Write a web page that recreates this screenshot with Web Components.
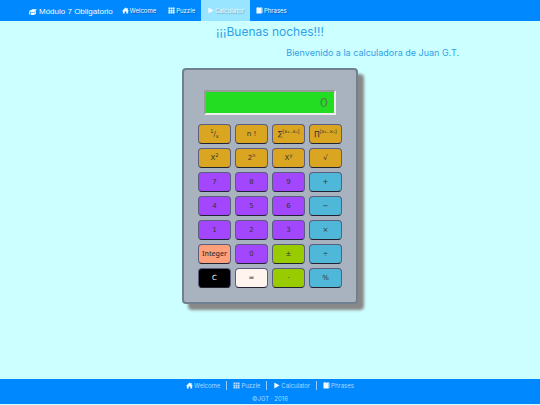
<!DOCTYPE html>
<html lang="es">
<head>
<meta charset="utf-8">
<meta name="viewport" content="width=device-width, initial-scale=1">
<title>Calculator</title>
<style>
    body {
        margin: 0;
        background: #ccffff;
        font-family: "Liberation Sans", Arial, sans-serif;
    }
</style>
</head>
<body>
<calc-app></calc-app>

<script>
const ICONS = {
    cap: '<path d="M0 6 8 2l8 1-6 6-6-1z"/><path d="M4 9l6 1 4-4v5c-2 3-7 4-11 2z"/><path d="M1 6h2l-1 7H0z"/>',
    home: '<path d="M8 1 0 9h2v6h4v-5h4v5h4V9h2l-3-3V2h-2v2z"/>',
    grid: '<path d="M1 1h4v4H1zM6 1h4v4H6zM11 1h4v4h-4zM1 6h4v4H1zM6 6h4v4H6zM11 6h4v4h-4zM1 11h4v4H1zM6 11h4v4H6zM11 11h4v4h-4z"/>',
    play: '<path d="M3 1l12 7-12 7z"/>',
    book: '<path d="M3 0h11v1H4L3 2h10v13H1V2z"/><path d="M14 2l1-1v12l-1 1z"/>'
};

const LINKS = [
    ['home', 'Welcome'],
    ['grid', 'Puzzle'],
    ['play', 'Calculator'],
    ['book', 'Phrases']
];

class GlyphIcon extends HTMLElement {
    connectedCallback() {
        this.attachShadow({ mode: 'open' });
        this.shadowRoot.innerHTML = `
            <style>
                :host {
                    display: inline-flex;
                    flex: none;
                    width: var(--icon-size, 7px);
                    height: var(--icon-size, 7px);
                }

                svg {
                    width: 100%;
                    height: 100%;
                    fill: currentColor;
                }
            </style>
            <svg viewBox="0 0 16 16" aria-hidden="true">${ICONS[this.getAttribute('name')]}</svg>
        `;
    }
}

class NavBar extends HTMLElement {
    connectedCallback() {
        this.attachShadow({ mode: 'open' });
        this.shadowRoot.innerHTML = `
            <style>
                :host {
                    display: block;
                    background: #0088ff;
                    color: #f2faff;
                }

                nav {
                    display: flex;
                    align-items: stretch;
                    height: 21px;
                    padding-left: 29px;
                }

                a {
                    display: flex;
                    align-items: center;
                    gap: 1px;
                    padding: 0 6px;
                    color: inherit;
                    font-family: Inter, sans-serif;
                    font-size: 6px;
                    text-decoration: none;
                    text-shadow: 1px 1px 1px rgba(0, 0, 0, 0.3);
                }

                a.brand {
                    --icon-size: 8px;
                    gap: 2px;
                    padding: 2px 3px 0 0;
                    font-family: "Liberation Sans", Arial, sans-serif;
                    font-size: 8px;
                    text-shadow: none;
                }

                a.active {
                    background: #99e5ff;
                }
            </style>
            <nav>
                <a class="brand" href="#"><glyph-icon name="cap"></glyph-icon>Módulo 7 Obligatorio</a>
                ${LINKS.map(([icon, text]) => `
                    <a href="#${text}" ${text === 'Calculator' ? 'class="active"' : ''}><glyph-icon name="${icon}"></glyph-icon>${text}</a>
                `).join('')}
            </nav>
        `;
    }
}

class CalcKey extends HTMLElement {
    connectedCallback() {
        this.attachShadow({ mode: 'open' });
        this.shadowRoot.innerHTML = `
            <style>
                :host {
                    display: block;
                    --key: #a347ff;
                    --ink: #333333;
                }

                :host([kind="fn"]) { --key: #daa520; }
                :host([kind="op"]) { --key: #4fb7d8; }
                :host([kind="sign"]) { --key: #99cc00; }
                :host([kind="int"]) { --key: #ffa07a; }
                :host([kind="clear"]) { --key: #000000; --ink: #ffffff; }
                :host([kind="equal"]) { --key: #fff5ee; }

                button {
                    display: block;
                    width: 100%;
                    height: 20px;
                    padding: 0;
                    border: 1px solid #5c5c80;
                    border-bottom-color: #222233;
                    border-radius: 4px;
                    background: var(--key);
                    color: var(--ink);
                    font: 7px/18px "DejaVu Sans", sans-serif;
                    white-space: nowrap;
                    cursor: pointer;
                }

                :host([kind="int"]) button {
                    font-family: "Noto Sans", sans-serif;
                    font-weight: 500;
                }

                ::slotted(sup), ::slotted(sub) {
                    font-size: 5px;
                    line-height: 0;
                }
            </style>
            <button type="button"><slot></slot></button>
        `;
    }
}

class CalcPad extends HTMLElement {
    connectedCallback() {
        this.attachShadow({ mode: 'open' });
        this.shadowRoot.innerHTML = `
            <style>
                :host {
                    display: block;
                    box-sizing: border-box;
                    width: 176px;
                    padding: 20px 15px 14px 14px;
                    border: 2px solid #708090;
                    border-radius: 4px;
                    background: #a9b3bf;
                    box-shadow: 6px 6px 3px #888888;
                }

                input {
                    display: block;
                    box-sizing: border-box;
                    width: calc(100% - 11px);
                    height: 25px;
                    margin: 0 0 9px 6px;
                    padding: 0 6px;
                    border: 2px inset #eeeeee;
                    border-radius: 0;
                    background: #22dd22;
                    color: #4f7f4f;
                    font: 13px "DejaVu Sans", sans-serif;
                    text-align: right;
                }

                .keys {
                    display: grid;
                    grid-template-columns: repeat(4, 1fr);
                    gap: 4px;
                    width: 144px;
                }
            </style>
            <input type="text" value="0" aria-label="Display">
            <div class="keys"><slot></slot></div>
        `;
    }
}

class PageFooter extends HTMLElement {
    connectedCallback() {
        this.attachShadow({ mode: 'open' });
        this.shadowRoot.innerHTML = `
            <style>
                :host {
                    display: block;
                    margin-bottom: 1px;
                    padding: 2px 0 1px;
                    background: #0088ff;
                    color: #a6dcff;
                    font: 6px/9px Inter, sans-serif;
                    text-align: center;
                }

                nav {
                    display: flex;
                    justify-content: center;
                }

                a {
                    display: flex;
                    align-items: center;
                    gap: 1px;
                    padding: 0 6px;
                    border-left: 1px solid #99ccff;
                    color: inherit;
                    text-decoration: none;
                }

                a:first-child {
                    border-left: 0;
                }

                glyph-icon {
                    color: #f2faff;
                }

                glyph-icon[name="grid"] {
                    color: #b3dbff;
                }

                p {
                    margin: 4px 0 0;
                }
            </style>
            <nav>
                ${LINKS.map(([icon, text]) => `<a href="#${text}"><glyph-icon name="${icon}"></glyph-icon>${text}</a>`).join('')}
            </nav>
            <p>©JGT · 2016</p>
        `;
    }
}

class CalcApp extends HTMLElement {
    connectedCallback() {
        this.attachShadow({ mode: 'open' });
        this.shadowRoot.innerHTML = `
            <style>
                :host {
                    display: flex;
                    flex-direction: column;
                    min-height: 100vh;
                }

                main {
                    display: flex;
                    flex: 1;
                    flex-direction: column;
                    align-items: center;
                    color: #2f9fe8;
                    font-family: Inter, sans-serif;
                }

                h1 {
                    margin: 3px 0 0;
                    font-size: 12px;
                    font-weight: 400;
                    line-height: 16px;
                }

                h2 {
                    align-self: flex-end;
                    margin: 6px 15% 8px 0;
                    font-size: 9px;
                    font-weight: 400;
                    line-height: 14px;
                }
            </style>
            <nav-bar></nav-bar>
            <main>
                <h1>¡¡¡Buenas noches!!!</h1>
                <h2>Bienvenido a la calculadora de Juan G.T.</h2>
                <calc-pad>
                    <calc-key kind="fn"><sup>1</sup>/<sub>x</sub></calc-key>
                    <calc-key kind="fn">n !</calc-key>
                    <calc-key kind="fn">∑<sup>[x₁..xₙ]</sup></calc-key>
                    <calc-key kind="fn">∏<sup>[x₁..xₙ]</sup></calc-key>
                    <calc-key kind="fn">X<sup>2</sup></calc-key>
                    <calc-key kind="fn">2<sup>n</sup></calc-key>
                    <calc-key kind="fn">X<sup>y</sup></calc-key>
                    <calc-key kind="fn">√</calc-key>
                    <calc-key>7</calc-key>
                    <calc-key>8</calc-key>
                    <calc-key>9</calc-key>
                    <calc-key kind="op">+</calc-key>
                    <calc-key>4</calc-key>
                    <calc-key>5</calc-key>
                    <calc-key>6</calc-key>
                    <calc-key kind="op">−</calc-key>
                    <calc-key>1</calc-key>
                    <calc-key>2</calc-key>
                    <calc-key>3</calc-key>
                    <calc-key kind="op">×</calc-key>
                    <calc-key kind="int">Integer</calc-key>
                    <calc-key>0</calc-key>
                    <calc-key kind="sign">±</calc-key>
                    <calc-key kind="op">÷</calc-key>
                    <calc-key kind="clear">C</calc-key>
                    <calc-key kind="equal">=</calc-key>
                    <calc-key kind="sign">·</calc-key>
                    <calc-key kind="op">%</calc-key>
                </calc-pad>
            </main>
            <page-footer></page-footer>
        `;
    }
}

customElements.define('glyph-icon', GlyphIcon);
customElements.define('nav-bar', NavBar);
customElements.define('calc-key', CalcKey);
customElements.define('calc-pad', CalcPad);
customElements.define('page-footer', PageFooter);
customElements.define('calc-app', CalcApp);
</script>
</body>
</html>
